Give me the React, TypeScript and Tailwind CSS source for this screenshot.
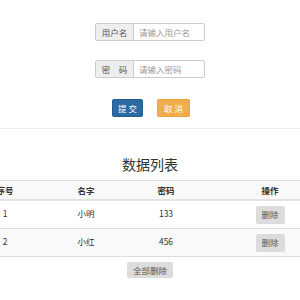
export default function App() {
  const rows = [
    { id: 1, name: '小明', pwd: '133' },
    { id: 2, name: '小红', pwd: '456' },
  ]
  return (
    <div className="w-[300px] h-[300px] overflow-hidden bg-white text-[#333] text-[8.5px]" style={{ fontFamily: '"Noto Sans CJK SC", "Noto Sans", sans-serif' }}>
      <div className="pt-[23px] flex flex-col items-center">
        <InputGroup label="用户名" placeholder="请输入用户名" />
        <div className="mt-[19px]"><InputGroup label="密　码" placeholder="请输入密码" /></div>
        <div className="mt-[21px] flex gap-[14px] pl-[2px]">
          <button className="w-[31px] h-[18px] rounded-[2px] bg-[#2c6aa3] border border-[#265d8f] text-white text-[8.5px] leading-none">提 交</button>
          <button className="w-[33px] h-[18px] rounded-[2px] bg-[#f0ad4e] border border-[#eea236] text-white text-[8.5px] leading-none">取 消</button>
        </div>
      </div>
      <div className="mt-[11px] border-t border-[#eee]" />
      <div className="mt-[25px] text-center text-[14px] leading-[20px] text-[#333]">数据列表</div>
      <div className="mt-[6px] ml-[-30px] w-[370px]">
        <div className="flex h-[21px] items-center bg-[#f9f9f9] border-t border-[#ddd] border-b-2 border-b-[#e3e3e3] font-semibold">
          <Cell w="w-[70px]">序号</Cell>
          <Cell w="w-[92px]">名字</Cell>
          <Cell w="w-[68px]">密码</Cell>
          <Cell w="w-[140px]">操作</Cell>
        </div>
        {rows.map((r, i) => (
          <div key={r.id} className={'flex h-[28px] border-b border-[#ddd] ' + (i % 2 ? 'bg-[#f9f9f9]' : 'bg-white')}>
            <Cell w="w-[70px] pt-[6px]">{r.id}</Cell>
            <Cell w="w-[92px] pt-[6px]">{r.name}</Cell>
            <Cell w="w-[68px] pt-[6px]">{r.pwd}</Cell>
            <div className="w-[140px] flex items-center justify-center">
              <button className="w-[29px] h-[18px] rounded-[2px] bg-[#dcdcdc] text-[#555] text-[8.5px] leading-none">删除</button>
            </div>
          </div>
        ))}
      </div>
      <div className="mt-[5px] flex justify-center">
        <button className="w-[46px] h-[16px] rounded-[2px] bg-[#dcdcdc] text-[#555] text-[8.5px] leading-none">全部删除</button>
      </div>
    </div>
  )
}

function InputGroup({ label, placeholder }: { label: string; placeholder: string }) {
  return (
    <div className="flex w-[110px] h-[18px] border border-[#ccc] rounded-[2px] overflow-hidden">
      <div className="w-[38px] bg-[#eee] border-r border-[#ccc] flex items-center justify-center text-[#555]">{label}</div>
      <input className="flex-1 min-w-0 px-[5px] outline-none text-[8.5px] placeholder:text-[#999]" placeholder={placeholder} />
    </div>
  )
}

function Cell({ w, children }: { w: string; children: React.ReactNode }) {
  return <div className={w + ' text-center leading-[12px]'}>{children}</div>
}
